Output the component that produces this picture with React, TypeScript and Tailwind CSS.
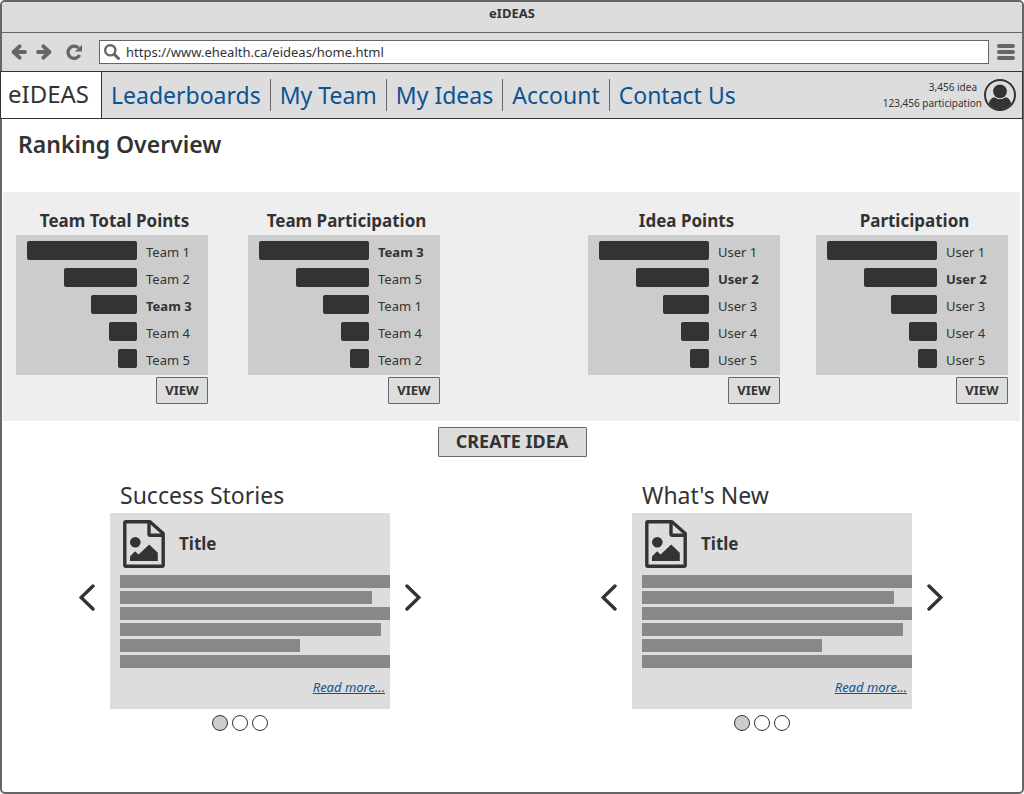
import React from "react";

type Entry = { name: string; mine?: boolean };
type Ranking = { title: string; entries: Entry[] };

const teams: Ranking[] = [
  {
    title: "Team Total Points",
    entries: [{ name: "Team 1" }, { name: "Team 2" }, { name: "Team 3", mine: true }, { name: "Team 4" }, { name: "Team 5" }],
  },
  {
    title: "Team Participation",
    entries: [{ name: "Team 3", mine: true }, { name: "Team 5" }, { name: "Team 1" }, { name: "Team 4" }, { name: "Team 2" }],
  },
];

const userEntries: Entry[] = [
  { name: "User 1" },
  { name: "User 2", mine: true },
  { name: "User 3" },
  { name: "User 4" },
  { name: "User 5" },
];

const users: Ranking[] = [
  { title: "Idea Points", entries: userEntries },
  { title: "Participation", entries: userEntries },
];

const barWidths = ["w-[110px]", "w-[73px]", "w-[46px]", "w-[28px]", "w-[19px]"];
const lineWidths = ["w-[270px]", "w-[252px]", "w-[270px]", "w-[261px]", "w-[180px]", "w-[270px]"];
const links = ["Leaderboards", "My Team", "My Ideas", "Account", "Contact Us"];

function ArrowIcon({ flip = false }: { flip?: boolean }) {
  return (
    <svg viewBox="0 0 16 16" className={flip ? "h-4 w-4 rotate-180" : "h-4 w-4"} fill="none" stroke="#666">
      <path d="M8.600 2.300 2.600 8l6 5.700" strokeLinejoin="round" strokeLinecap="round" strokeWidth="3.800" />
      <path d="M3 8h11" strokeLinecap="round" strokeWidth="3.800" />
    </svg>
  );
}

function ReloadIcon() {
  return (
    <svg viewBox="0 0 16 16" className="h-4 w-4">
      <path d="M13.600 11A6.100 6.100 0 1 1 12.400 3.900" fill="none" stroke="#666" strokeWidth="3.300" />
      <path d="M16 .8V7.600H9Z" fill="#666" />
    </svg>
  );
}

function SearchIcon() {
  return (
    <svg viewBox="0 0 16 16" className="h-4 w-4 shrink-0" fill="none" stroke="#666">
      <circle cx="6.3" cy="6.3" r="5.1" strokeWidth="2.4" />
      <path d="m10.2 10.2 4.3 4.3" strokeWidth="3" strokeLinecap="round" />
    </svg>
  );
}

function MenuIcon() {
  return (
    <svg viewBox="0 0 18 16" className="h-4 w-[18px]" stroke="#666" strokeWidth="4" strokeLinecap="round">
      <path d="M2 2h14M2 8h14M2 14h14" />
    </svg>
  );
}

function UserIcon() {
  return (
    <svg viewBox="0 0 32 32" className="h-8 w-8">
      <circle cx="16" cy="16" r="15" fill="none" stroke="#333" strokeWidth="2" />
      <circle cx="16" cy="12.3" r="6.9" fill="#333" />
      <path d="M4.8 24.6C5.6 20.6 8 18.6 10.4 18.2c3.2 2.6 8 2.6 11.2 0 2.4.4 4.8 2.4 5.6 6.4C24.800 28 21 30.400 16 30.400S7.200 28 4.800 24.600Z" fill="#333" />
    </svg>
  );
}

function PictureIcon() {
  return (
    <svg viewBox="0 0 42 48" className="h-12 w-[42px]">
      <path d="M3 1.800H27L40.200 13.500V45Q40.200 46.200 39 46.200H3Q1.800 46.200 1.800 45V3Q1.800 1.800 3 1.800Z" fill="none" stroke="#333" strokeWidth="3.400" strokeLinejoin="round" />
      <path d="M26 1.800V14Q26 15.300 27.300 15.300H40.200" fill="none" stroke="#333" strokeWidth="3.400" />
      <circle cx="12.300" cy="22.300" r="5.300" fill="#333" />
      <path d="M7 41V36.500l5-5.300 3.600 3.200L26.200 24.500l8.600 8.300V41Z" fill="#333" />
    </svg>
  );
}

function Chevron({ flip = false }: { flip?: boolean }) {
  return (
    <svg viewBox="0 0 16 27" className={flip ? "h-[27px] w-4 rotate-180" : "h-[27px] w-4"} fill="none" stroke="#333" strokeWidth="3.400" strokeLinecap="round">
      <path d="M14 2 2.100 13.500 14 25" />
    </svg>
  );
}

function RankingCard({ ranking }: { ranking: Ranking }) {
  return (
    <section className="flex w-48 flex-col">
      <h2 className="pl-[5px] text-center text-[17px] leading-6 font-bold whitespace-nowrap">{ranking.title}</h2>
      <ol className="mt-0.5 bg-[#ccc] pt-0.5 pb-[3px]">
        {ranking.entries.map((entry, i) => (
          <li key={entry.name} className="flex h-[27px] items-center gap-[9px]">
            <span className="flex w-[121px] justify-end">
              <span className={`h-[19px] rounded-[2px] bg-[#333] ${barWidths[i]}`} />
            </span>
            <span className={entry.mine ? "pt-0.5 text-[13px] leading-5 font-bold" : "pt-0.5 text-[13px] leading-5"}>{entry.name}</span>
          </li>
        ))}
      </ol>
      <button type="button" className="mt-0.5 h-[27px] w-[52px] self-end rounded-[1px] border border-[#666] bg-[#ddd] pb-0.5 text-[13px] leading-5 font-bold">
        VIEW
      </button>
    </section>
  );
}

function Carousel({ heading }: { heading: string }) {
  return (
    <section className="w-[344px]">
      <h2 className="pl-[41px] text-[23px] leading-8">{heading}</h2>
      <div className="mt-0.5 flex items-center">
        <button type="button" aria-label="Previous" className="-mt-7 w-[31px]">
          <Chevron />
        </button>
        <article className="h-[196px] w-[280px] bg-[#ddd] pt-[7px] pl-2.5">
          <div className="flex items-center gap-[14px] pl-[3px]">
            <PictureIcon />
            <h3 className="text-[17px] leading-6 font-bold">Title</h3>
          </div>
          <div className="mt-[7px] flex flex-col gap-[3px]">
            {lineWidths.map((width, i) => (
              <span key={i} className={`h-[13px] bg-[#888] ${width}`} />
            ))}
          </div>
          <p className="mt-[9px] pr-[5px] text-right text-[13px] leading-5">
            <a href="#" className="text-[#0b5394] italic underline">Read more...</a>
          </p>
        </article>
        <button type="button" aria-label="Next" className="-mt-7 flex w-[31px] justify-end">
          <Chevron flip />
        </button>
      </div>
      <div className="mt-[6px] flex gap-1 pl-[133px]">
        {[0, 1, 2].map((i) => (
          <button key={i} type="button" aria-label={`Slide ${i + 1}`} className={i === 0 ? "h-4 w-4 rounded-full border border-[#333] bg-[#ccc]" : "h-4 w-4 rounded-full border border-[#333] bg-white"} />
        ))}
      </div>
    </section>
  );
}

export default function App() {
  return (
    <div className="min-h-screen rounded-[5px] border-2 border-[#666] bg-white font-['Noto_Sans',sans-serif] text-[#333]">
      <header className="rounded-t-[3px] bg-[#ddd]">
        <div className="h-[31px] border-b border-[#666] pt-px text-center text-[13px] leading-5 font-bold">eIDEAS</div>
        <div className="flex h-[38px] items-center pr-[7px] pl-[9px]">
          <button type="button" aria-label="Back" className="mr-[9px]"><ArrowIcon /></button>
          <button type="button" aria-label="Forward" className="mr-[14px]"><ArrowIcon flip /></button>
          <button type="button" aria-label="Reload" className="mr-[17px]"><ReloadIcon /></button>
          <label className="flex h-6 flex-1 items-center gap-1.5 border border-[#666] bg-white pl-1">
            <SearchIcon />
            <input aria-label="Address" defaultValue="https://www.ehealth.ca/eideas/home.html" className="min-w-0 flex-1 text-[13px] leading-5 outline-none" />
          </label>
          <button type="button" aria-label="Menu" className="ml-2"><MenuIcon /></button>
        </div>
        <nav className="-mr-px -ml-0.5 flex h-12 items-center border border-[#333] text-[23px] leading-8">
          <a href="#" className="flex h-full w-[101px] items-center border-r border-[#333] bg-white pb-0.5 pl-[7px] text-[24px]">eIDEAS</a>
          <ul className="flex divide-x divide-[#666] text-[#0b5394]">
            {links.map((link) => (
              <li key={link} className="px-[9px]"><a href="#" className="whitespace-nowrap">{link}</a></li>
            ))}
          </ul>
          <div className="ml-auto flex items-center gap-0.5 pr-1.5">
            <div className="text-right text-[10px] leading-4">
              <p className="pr-[5px]">3,456 idea</p>
              <p>123,456 participation</p>
            </div>
            <UserIcon />
          </div>
        </nav>
      </header>
      <main>
        <h1 className="px-4 pt-[9px] text-[23px] leading-8 font-semibold">Ranking Overview</h1>
        <div className="mt-8 mr-0.5 ml-px flex justify-between bg-[#eee] pt-[17px] pr-3 pb-[17px] pl-[13px]">
          <div className="flex gap-10">
            {teams.map((r) => <RankingCard key={r.title} ranking={r} />)}
          </div>
          <div className="flex gap-9">
            {users.map((r) => <RankingCard key={r.title} ranking={r} />)}
          </div>
        </div>
        <div className="mt-1.5 flex justify-center">
          <button type="button" className="h-[30px] w-[149px] rounded-[1px] border border-[#666] bg-[#ddd] pb-0.5 text-[18px] leading-6 font-bold">CREATE IDEA</button>
        </div>
        <div className="mt-[22px] flex justify-center gap-[178px] pb-10">
          <Carousel heading="Success Stories" />
          <Carousel heading="What's New" />
        </div>
      </main>
    </div>
  );
}
